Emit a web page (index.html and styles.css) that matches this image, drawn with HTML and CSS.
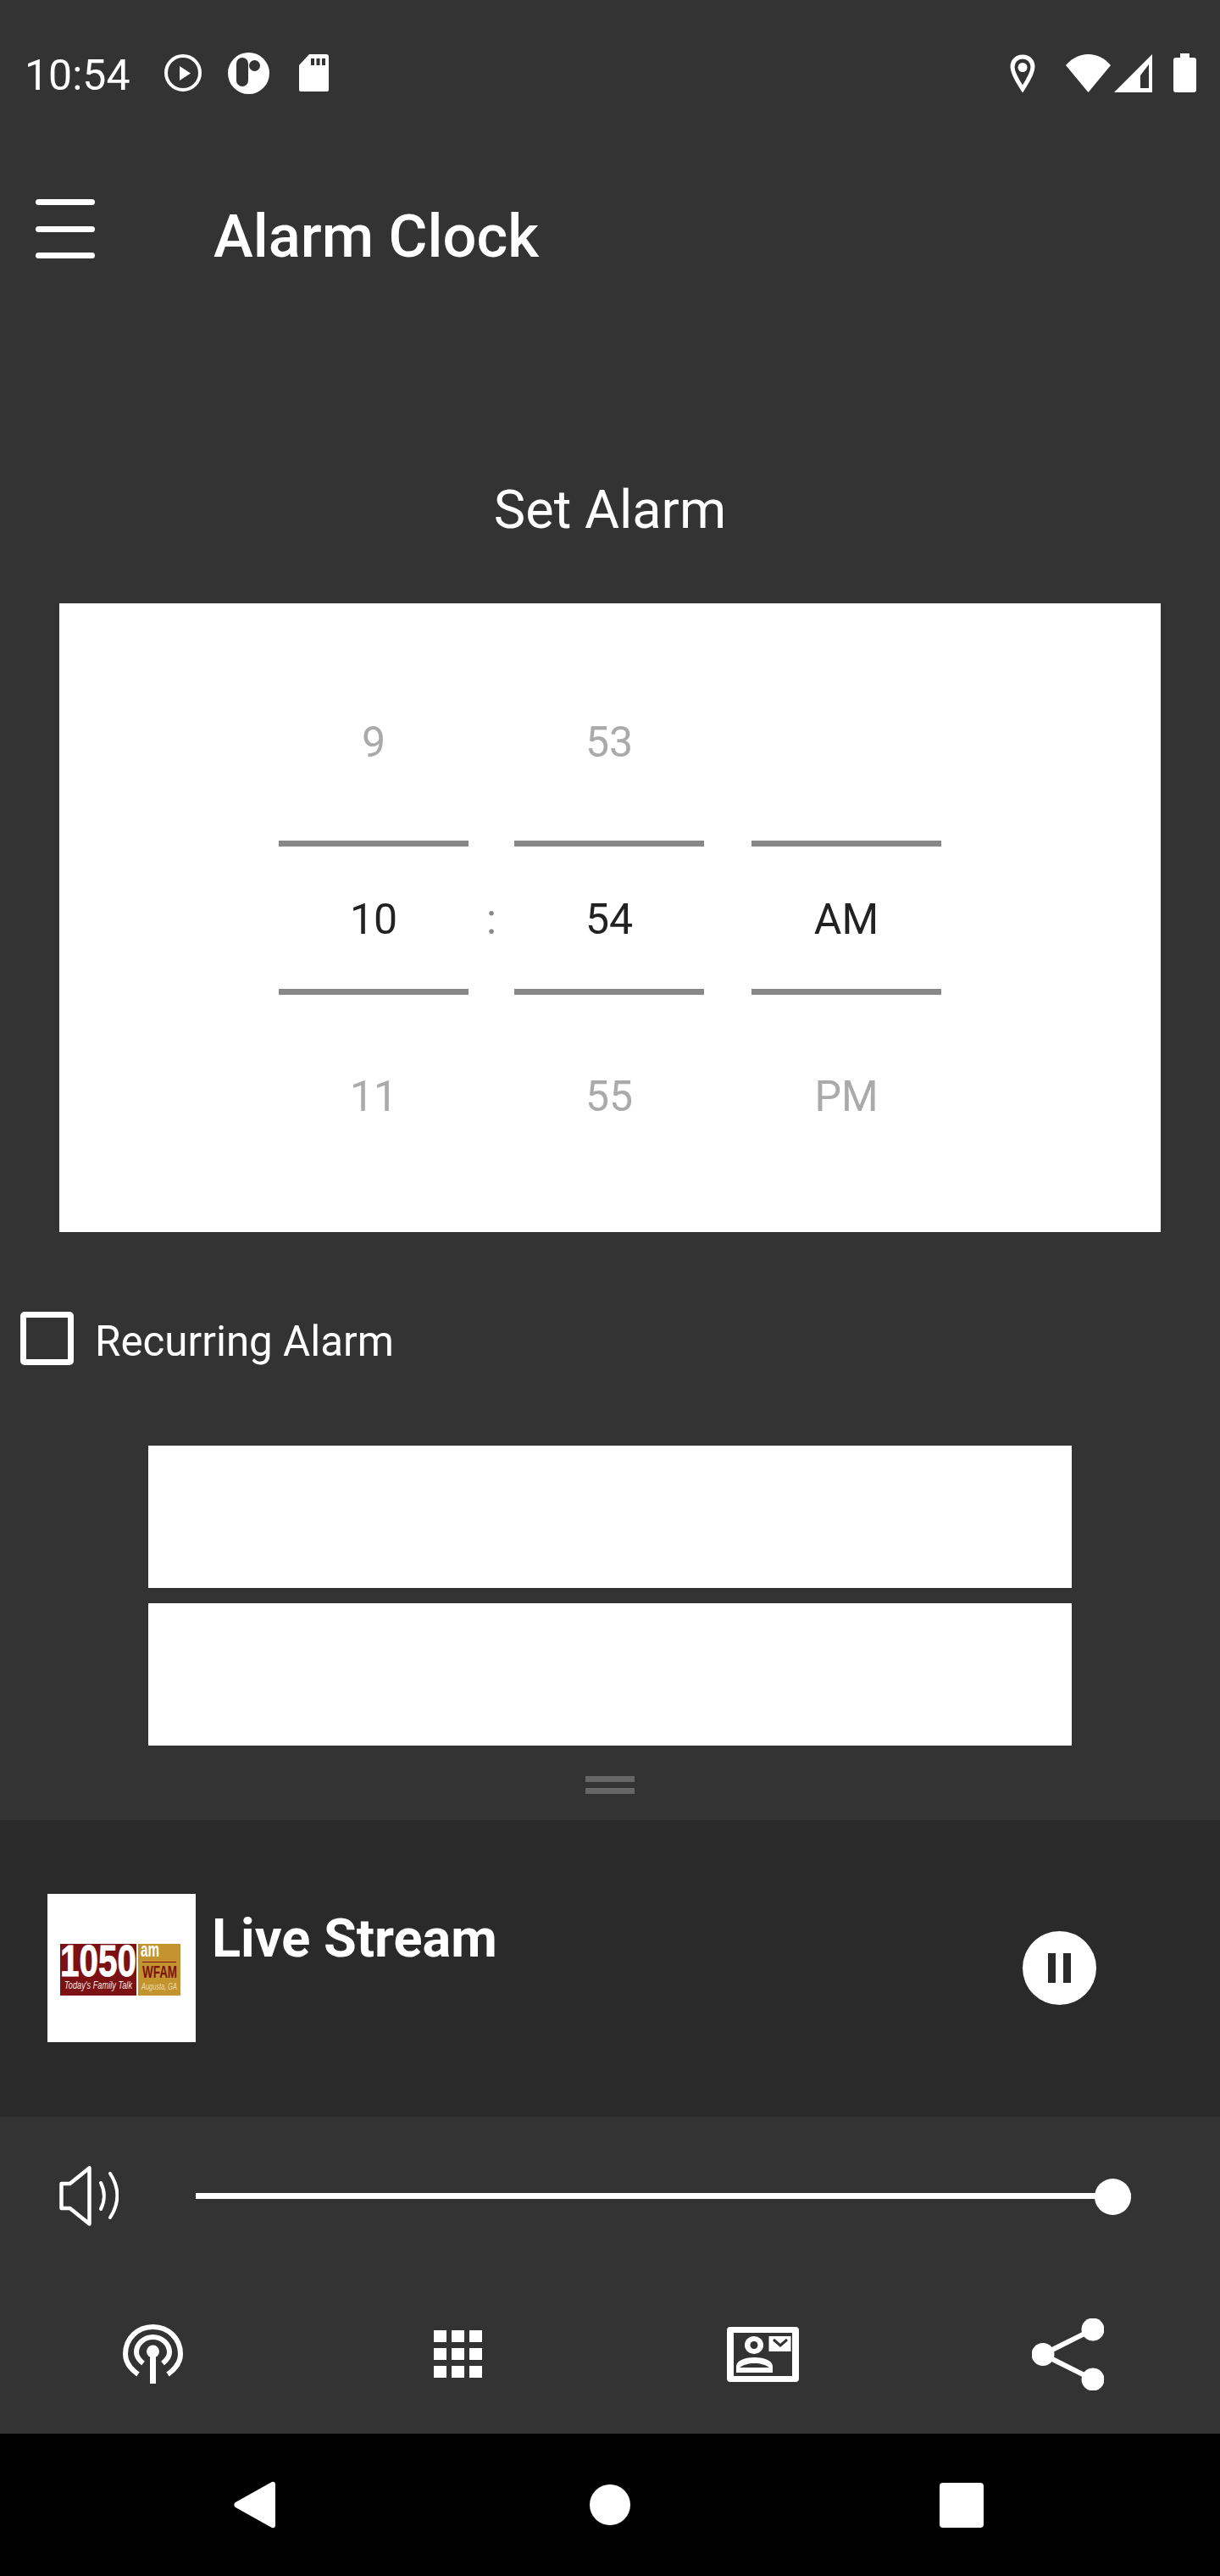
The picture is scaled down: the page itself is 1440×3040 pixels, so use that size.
FILE: index.html
```html
<!DOCTYPE html>
<html lang="en">
<head>
    <meta charset="UTF-8">
    <meta name="viewport" content="width=device-width, initial-scale=1.0">
    <title>Alarm Clock</title>
    <link rel="stylesheet" href="styles.css">
</head>
<body>
    <div class="app">
        <div class="status-bar">
            <span class="status-time">10:54</span>
            <svg class="st-play" viewBox="0 0 44 44"><circle cx="22" cy="22" r="20" fill="none" stroke="#fff" stroke-width="4"/><path d="M18 14v17l13-8.500z" fill="#fff"/></svg>
            <svg class="st-pocket" viewBox="0 0 49 49"><circle cx="24.500" cy="24.500" r="24.500" fill="#fff"/><rect x="10" y="6" width="14" height="34" rx="7" fill="#333"/><circle cx="31.500" cy="15.500" r="6.500" fill="#333"/></svg>
            <svg class="st-sd" viewBox="0 0 35 44"><path d="M12 0h20a3 3 0 0 1 3 3v39a2 2 0 0 1-2 2H2a2 2 0 0 1-2-2V13z" fill="#fff"/><path d="M14 5h4v8h-4zM20.500 5h4v8h-4zM27 5h4v8h-4z" fill="#333"/></svg>
            <div class="status-right">
                <svg class="st-loc" viewBox="0 0 30 45"><path d="M15 3C8 3 3 8 3 15c0 8 7 18 12 26 5-8 12-18 12-26 0-7-5-12-12-12z" fill="none" stroke="#fff" stroke-width="5"/><circle cx="15" cy="15.500" r="5.500" fill="#fff"/></svg>
                <svg class="st-wifi" viewBox="0 0 53 45"><path d="M0 13C7 5 16 0 26.500 0S46 5 53 13L26.500 45z" fill="#fff"/></svg>
                <svg class="st-signal" viewBox="0 0 45 45"><path d="M45 0v45H0z" fill="#fff"/><path d="M31 25l10-13v28H31z" fill="#333"/></svg>
                <svg class="st-battery" viewBox="0 0 27 46"><path d="M8 0h11v5h5a3 3 0 0 1 3 3v35a3 3 0 0 1-3 3H3a3 3 0 0 1-3-3V8a3 3 0 0 1 3-3h5z" fill="#fff"/></svg>
            </div>
        </div>

        <header class="toolbar">
            <div class="hamburger"><span></span><span></span><span></span></div>
            <h1 class="toolbar-title">Alarm Clock</h1>
        </header>

        <main class="content">
            <h2 class="set-title">Set Alarm</h2>
            <div class="picker-card">
                <div class="picker">
                    <div class="wheel">
                        <div class="cell dim">9</div>
                        <div class="cell active">10</div>
                        <div class="cell dim">11</div>
                    </div>
                    <div class="colon">:</div>
                    <div class="wheel">
                        <div class="cell dim">53</div>
                        <div class="cell active">54</div>
                        <div class="cell dim">55</div>
                    </div>
                    <div class="wheel wheel-ampm">
                        <div class="cell dim"></div>
                        <div class="cell active">AM</div>
                        <div class="cell dim">PM</div>
                    </div>
                </div>
            </div>
            <label class="recurring"><span class="checkbox"></span><span class="recurring-text">Recurring Alarm</span></label>
            <div class="blank-btn"></div>
            <div class="blank-btn"></div>
        </main>

        <div class="drag-handle"><span></span><span></span></div>

        <section class="player">
            <div class="logo">
                <svg viewBox="0 0 175 175" width="175" height="175">
                    <rect x="15" y="59" width="90" height="61" fill="#7b1113"/>
                    <rect x="107" y="59" width="50" height="61" fill="#c3932e"/>
                    <text class="logo-num" x="15" y="97" textLength="90" lengthAdjust="spacingAndGlyphs">1050</text>
                    <text class="logo-tag" x="20" y="112" textLength="80" lengthAdjust="spacingAndGlyphs">Today's Family Talk</text>
                    <text class="logo-am" x="110" y="74" textLength="22" lengthAdjust="spacingAndGlyphs">am</text>
                    <rect x="112" y="80" width="40" height="1" fill="#7b1113"/>
                    <text class="logo-wfam" x="112" y="99" textLength="41" lengthAdjust="spacingAndGlyphs">WFAM</text>
                    <text class="logo-city" x="111" y="113" textLength="42" lengthAdjust="spacingAndGlyphs">Augusta, GA</text>
                </svg>
            </div>
            <div class="player-title">Live Stream</div>
            <div class="pause-btn"><span></span><span></span></div>
        </section>

        <section class="bottom-panel">
            <div class="volume-row">
                <svg class="speaker" viewBox="0 0 70 71" fill="none" stroke="#fff" stroke-linecap="round" stroke-linejoin="round">
                    <path d="M2.500 21h10L35.500 2.500v66L12.500 50h-10z" stroke-width="4.500"/>
                    <path d="M49 20c5 10 5 21 0 31" stroke-width="4"/>
                    <path d="M60 9c11 17 11 35 0 52" stroke-width="4"/>
                </svg>
                <div class="slider"><div class="thumb"></div></div>
            </div>
            <nav class="tabs">
                <svg class="tab-radio" viewBox="0 0 71 70" fill="none" stroke="#fff">
                    <path d="M18 59C8 52 3 44 3 35 3 17 17 3 35.500 3S68 17 68 35c0 9-5 17-15 24" stroke-width="6"/>
                    <path d="M24 46c-5-4-8-8-8-13 0-10 9-18 19.500-18S55 23 55 33c0 5-3 9-8 13" stroke-width="6"/>
                    <circle cx="35.500" cy="32" r="7.500" fill="#fff" stroke="none"/>
                    <path d="M35.500 36v34" stroke-width="7"/>
                </svg>
                <div class="tab-grid">
                    <span></span><span></span><span></span>
                    <span></span><span></span><span></span>
                    <span></span><span></span><span></span>
                </div>
                <svg class="tab-contact" viewBox="0 0 85 65">
                    <path d="M4 0h77a4 4 0 0 1 4 4v57a4 4 0 0 1-4 4H4a4 4 0 0 1-4-4V4a4 4 0 0 1 4-4zM8 7v51h69V7z" fill="#fff" fill-rule="evenodd"/>
                    <ellipse cx="32" cy="21.500" rx="11" ry="10.500" fill="#fff"/>
                    <ellipse cx="32" cy="21.500" rx="4.500" ry="4.500" fill="#333"/>
                    <path d="M11 54V47c0-7 9-11 21.500-11S54 40 54 47v7z" fill="#fff"/>
                    <path d="M15 48c4-3 10-5 17.500-5S46 45 50 48z" fill="#333"/>
                    <rect x="49.500" y="11" width="26" height="18" fill="#fff"/>
                    <path d="M55 15l8 7 8-7" fill="none" stroke="#333" stroke-width="3"/>
                </svg>
                <svg class="tab-share" viewBox="0 0 85 85">
                    <path d="M13 42.500L72 13M13 42.500L72 72" stroke="#fff" stroke-width="6" fill="none"/>
                    <circle cx="72" cy="13" r="13.500" fill="#fff"/>
                    <circle cx="13" cy="42.500" r="13.500" fill="#fff"/>
                    <circle cx="72" cy="72" r="13.500" fill="#fff"/>
                </svg>
            </nav>
        </section>

        <div class="nav-bar">
            <svg class="nav-back" viewBox="0 0 49 56"><path d="M44 1.500a3 3 0 0 1 5 2.500v48a3 3 0 0 1-5 2.500L2 31a3.500 3.500 0 0 1 0-6z" fill="#fff"/></svg>
            <div class="nav-home"></div>
            <div class="nav-recent"></div>
        </div>
    </div>
</body>
</html>
```

FILE: styles.css
```css
* {
    box-sizing: border-box;
}

body {
    margin: 0;
    background: #333;
    font-family: Roboto, "Noto Sans", sans-serif;
    color: white;
}

.app {
    width: 1440px;
    height: 3040px;
    display: flex;
    flex-direction: column;
    overflow: hidden;
}

/* status bar */
.status-bar {
    height: 172px;
    display: flex;
    align-items: center;
    padding: 0 28px 0 29px;
}

.status-time {
    font-size: 50px;
    width: 165px;
    margin-top: 6px;
}

.status-bar svg {
    display: block;
}

.st-play {
    width: 44px;
    height: 44px;
    margin-right: 31px;
}

.st-pocket {
    width: 49px;
    height: 49px;
    margin-right: 35px;
}

.st-sd {
    width: 35px;
    height: 44px;
}

.status-right {
    margin-left: auto;
    display: flex;
    align-items: center;
}

.st-loc {
    width: 30px;
    height: 45px;
    margin-right: 36px;
}

.st-wifi {
    width: 53px;
    height: 45px;
    margin-right: 4px;
}

.st-signal {
    width: 45px;
    height: 45px;
    margin-right: 25px;
}

.st-battery {
    width: 27px;
    height: 46px;
}

/* toolbar */
.toolbar {
    height: 196px;
    display: flex;
    align-items: center;
    padding-left: 42px;
}

.hamburger {
    width: 70px;
    display: flex;
    flex-direction: column;
    gap: 24.5px;
    margin-right: 140px;
}

.hamburger span {
    height: 7px;
    border-radius: 4px;
    background: white;
}

.toolbar-title {
    margin: 18px 0 0;
    font-size: 70.5px;
    font-weight: 500;
}

/* alarm */
.content {
    padding-top: 199px;
}

.set-title {
    margin: 0 0 75px;
    font-size: 63px;
    font-weight: 400;
    text-align: center;
    line-height: 70px;
}

.picker-card {
    margin: 0 70px;
    height: 742px;
    background: white;
    display: flex;
    justify-content: center;
    align-items: center;
}

.picker {
    display: flex;
    color: #222;
    font-size: 50px;
}

.wheel {
    width: 224px;
    display: flex;
    flex-direction: column;
}

.cell {
    height: 236px;
    padding-top: 4px;
    display: flex;
    align-items: center;
    justify-content: center;
    color: #222;
}

.cell.dim {
    color: #aaa;
}

.cell.active {
    border-top: 7px solid #888;
    border-bottom: 7px solid #888;
    height: 182px;
}

.colon {
    width: 54px;
    padding-top: 4px;
    display: flex;
    align-items: center;
    justify-content: center;
    color: #888;
}

.wheel-ampm {
    margin-left: 56px;
}

.recurring {
    display: flex;
    align-items: center;
    font-size: 49.3px;
    padding-left: 24px;
    height: 63px;
    margin-top: 94px;
}

.checkbox {
    width: 63px;
    height: 63px;
    border: 7px solid white;
    border-radius: 5px;
    margin-right: 25px;
}

.recurring-text {
    padding-top: 6px;
}

.blank-btn {
    margin: 0 175px;
    height: 168px;
    background: white;
}

.recurring + .blank-btn {
    margin-top: 95px;
}

.blank-btn + .blank-btn {
    margin-top: 18px;
}

.drag-handle {
    height: 88px;
    display: flex;
    flex-direction: column;
    align-items: center;
    padding-top: 36px;
    gap: 7px;
}

.drag-handle span {
    width: 58px;
    height: 7px;
    background: #666;
}

/* player */
.player {
    height: 350px;
    background: #2a2a2a;
    display: flex;
    padding-left: 56px;
    padding-top: 87px;
}

.logo {
    width: 175px;
    height: 175px;
    background: white;
    margin-right: 19px;
}

.logo svg {
    display: block;
}

.logo-num {
    font: 700 52px "Liberation Sans", sans-serif;
    fill: #fff;
    stroke: #fff;
    stroke-width: 0.8;
}

.logo-tag {
    font: italic 400 13px "Liberation Sans", sans-serif;
    fill: #f3e6e0;
}

.logo-am {
    font: 700 23px "Liberation Sans", sans-serif;
    fill: #fff;
}

.logo-wfam {
    font: 700 20px "Liberation Sans", sans-serif;
    fill: #7b1113;
}

.logo-city {
    font: italic 400 11px "Liberation Sans", sans-serif;
    fill: #ecdcb0;
}

.player-title {
    font-size: 63px;
    font-weight: 700;
    line-height: 75px;
    margin-top: 15px;
}

.pause-btn {
    width: 87px;
    height: 87px;
    border-radius: 50%;
    background: white;
    margin-left: auto;
    margin-right: 146px;
    margin-top: 44px;
    display: flex;
    justify-content: center;
    align-items: center;
    gap: 9px;
}

.pause-btn span {
    width: 9px;
    height: 35px;
    background: #2a2a2a;
}

/* volume + tabs */
.bottom-panel {
    height: 374px;
    display: flex;
    flex-direction: column;
}

.volume-row {
    display: flex;
    align-items: center;
    height: 186px;
    padding: 0 105px 0 70px;
}

.speaker {
    width: 70px;
    height: 71px;
    margin-right: 91px;
}

.slider {
    flex: 1;
    height: 7px;
    background: white;
    position: relative;
}

.thumb {
    position: absolute;
    right: 0;
    top: -17px;
    width: 43px;
    height: 43px;
    border-radius: 50%;
    background: white;
}

.tabs {
    display: grid;
    grid-template-columns: repeat(4, 360px);
    justify-items: center;
    align-items: center;
    height: 188px;
}

.tab-radio {
    width: 71px;
    height: 70px;
}

.tab-grid {
    width: 57px;
    display: grid;
    grid-template-columns: repeat(3, 15px);
    justify-content: space-between;
    row-gap: 7px;
}

.tab-grid span {
    height: 14px;
    background: white;
}

.tab-contact {
    width: 85px;
    height: 65px;
}

.tab-share {
    width: 85px;
    height: 85px;
}

/* android nav */
.nav-bar {
    flex: 1;
    background: black;
    display: flex;
    align-items: center;
    padding-left: 276px;
}

.nav-back {
    width: 49px;
    height: 56px;
}

.nav-home {
    width: 48px;
    height: 48px;
    border-radius: 50%;
    background: white;
    margin: 0 365px 0 371px;
}

.nav-recent {
    width: 52px;
    height: 53px;
    border-radius: 4px;
    background: white;
}
```
